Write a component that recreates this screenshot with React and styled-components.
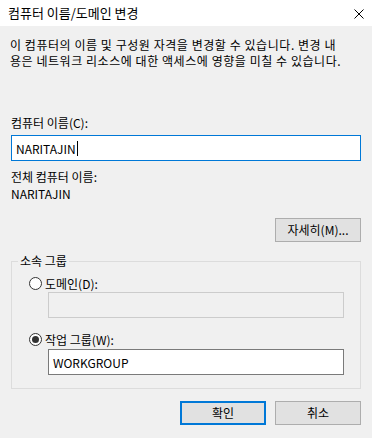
import React from "react";
import styled, { createGlobalStyle, css } from "styled-components";

const Global = createGlobalStyle`
  html, body { margin: 0; padding: 0; }
  body {
    background: #f0f0f0;
    font-family: "Noto Sans CJK KR", "Noto Sans", sans-serif;
    font-size: 12px;
    color: #000;
  }
`;

const Dialog = styled.div`
  width: 372px;
  height: 438px;
  background: #f0f0f0;
  display: flex;
  flex-direction: column;
  overflow: hidden;
`;

const TitleBar = styled.div`
  height: 26px;
  background: #fff;
  display: flex;
  align-items: center;
  justify-content: space-between;
  padding: 0 8px 0 8px;
  box-sizing: border-box;
  flex-shrink: 0;
`;

const Title = styled.span`
  font-size: 13px;
  line-height: 16px;
`;

const CloseBtn = styled.div`
  width: 10px;
  height: 10px;
  margin-top: 1px;
  display: flex;
`;

const Body = styled.div`
  display: flex;
  flex-direction: column;
  padding: 11px 11px 0 11px;
`;

const Description = styled.div`
  line-height: 16px;
  margin-left: -1px;
  letter-spacing: 0.55px;
  white-space: nowrap;
`;

const Label = styled.div`
  line-height: 16px;
  margin-top: ${(p) => p.$mt || 0}px;
`;

const TextBox = styled.div`
  height: 26px;
  box-sizing: border-box;
  border: 1px solid ${(p) => (p.$focused ? "#0078d7" : p.$disabled ? "#cccccc" : "#7a7a7a")};
  background: ${(p) => (p.$disabled ? "#f0f0f0" : "#fff")};
  display: flex;
  align-items: center;
  padding-left: 4px;
  margin-top: ${(p) => p.$mt || 0}px;
  ${(p) =>
    p.$indent &&
    css`
      margin-left: 36px;
    `}
`;

const Caret = styled.span`
  display: inline-block;
  width: 1px;
  height: 15px;
  background: #000;
  margin-left: 1px;
`;

const ButtonRow = styled.div`
  display: flex;
  justify-content: flex-end;
  gap: 9px;
  margin-top: ${(p) => p.$mt || 0}px;
`;

const Button = styled.div`
  width: 86px;
  height: 24px;
  box-sizing: border-box;
  background: #e1e1e1;
  border: ${(p) => (p.$default ? "2px solid #0078d7" : "1px solid #adadad")};
  display: flex;
  align-items: center;
  justify-content: center;
  line-height: 16px;
`;

const Group = styled.fieldset`
  margin: 11px 0 0 0;
  padding: 0 16px 13px 0;
  border: 1px solid #dcdcdc;
  min-width: 0;
  display: flex;
  flex-direction: column;
`;

const Legend = styled.legend`
  margin-left: 6px;
  padding: 0 2px;
  line-height: 16px;
`;

const RadioRow = styled.div`
  display: flex;
  align-items: center;
  height: 16px;
  margin-left: 17px;
  margin-top: ${(p) => p.$mt || 0}px;
  gap: 3px;
`;

const RadioCircle = styled.span`
  width: 13px;
  height: 13px;
  box-sizing: border-box;
  border: 1px solid #333;
  border-radius: 50%;
  background: #fff;
  display: flex;
  align-items: center;
  justify-content: center;
  &::after {
    content: "";
    width: 7px;
    height: 7px;
    border-radius: 50%;
    background: ${(p) => (p.$checked ? "#333" : "transparent")};
  }
`;

export default function App() {
  return (
    <>
      <Global />
      <Dialog>
        <TitleBar>
          <Title>컴퓨터 이름/도메인 변경</Title>
          <CloseBtn>
            <svg width="10" height="10" viewBox="0 0 10 10">
              <path d="M0.5 0.5 L9.5 9.5 M9.5 0.5 L0.5 9.5" stroke="#000" strokeWidth="1" fill="none" />
            </svg>
          </CloseBtn>
        </TitleBar>
        <Body>
          <Description>
            이 컴퓨터의 이름 및 구성원 자격을 변경할 수 있습니다. 변경 내
            <br />
            용은 네트워크 리소스에 대한 액세스에 영향을 미칠 수 있습니다.
          </Description>
          <Label $mt={46}>컴퓨터 이름(C):</Label>
          <TextBox $focused $mt={4}>
            NARITAJIN
            <Caret />
          </TextBox>
          <Label $mt={8}>전체 컴퓨터 이름:</Label>
          <Label $mt={1}>NARITAJIN</Label>
          <ButtonRow $mt={16}>
            <Button>자세히(M)...</Button>
          </ButtonRow>
          <Group>
            <Legend>소속 그룹</Legend>
            <RadioRow $mt={6}>
              <RadioCircle />
              <span>도메인(D):</span>
            </RadioRow>
            <TextBox $indent $disabled $mt={1} />
            <RadioRow $mt={13}>
              <RadioCircle $checked />
              <span>작업 그룹(W):</span>
            </RadioRow>
            <TextBox $indent $mt={2}>WORKGROUP</TextBox>
          </Group>
          <ButtonRow $mt={12}>
            <Button $default>확인</Button>
            <Button>취소</Button>
          </ButtonRow>
        </Body>
      </Dialog>
    </>
  );
}
